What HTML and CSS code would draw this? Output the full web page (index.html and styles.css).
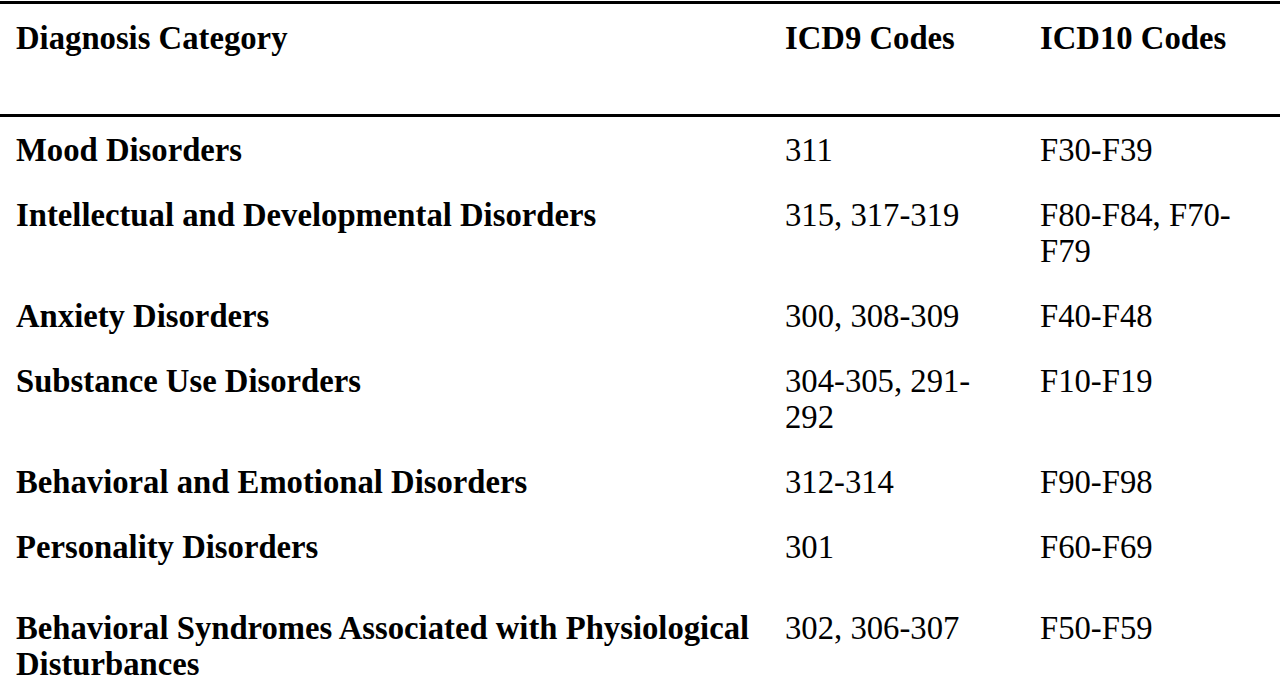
FILE: index.html
```html
<!DOCTYPE html>
<html lang="en">
<head>
<meta charset="utf-8">
<title>Diagnosis Categories</title>
<link rel="stylesheet" href="styles.css">
</head>
<body>
<table class="codes">
  <colgroup>
    <col class="c-cat">
    <col class="c-icd9">
    <col class="c-icd10">
  </colgroup>
  <thead>
    <tr>
      <th class="cat">Diagnosis Category</th>
      <th>ICD9 Codes</th>
      <th>ICD10 Codes</th>
    </tr>
  </thead>
  <tbody>
    <tr>
      <td class="cat">Mood Disorders</td>
      <td>311</td>
      <td>F30-F39</td>
    </tr>
    <tr>
      <td class="cat">Intellectual and Developmental Disorders</td>
      <td>315, 317-319</td>
      <td>F80-F84, F70-<wbr>F79</td>
    </tr>
    <tr>
      <td class="cat">Anxiety Disorders</td>
      <td>300, 308-309</td>
      <td>F40-F48</td>
    </tr>
    <tr>
      <td class="cat">Substance Use Disorders</td>
      <td>304-305, 291-<wbr>292</td>
      <td>F10-F19</td>
    </tr>
    <tr>
      <td class="cat">Behavioral and Emotional Disorders</td>
      <td>312-314</td>
      <td>F90-F98</td>
    </tr>
    <tr class="spaced">
      <td class="cat">Personality Disorders</td>
      <td>301</td>
      <td>F60-F69</td>
    </tr>
    <tr>
      <td class="cat">Behavioral Syndromes Associated with Physiological Disturbances</td>
      <td>302, 306-307</td>
      <td>F50-F59</td>
    </tr>
  </tbody>
</table>
</body>
</html>
```

FILE: styles.css
```css
html, body {
  margin: 0;
  padding: 0;
  background: #ffffff;
}

body {
  padding-top: 1px;
  font-family: "Liberation Serif", "Times New Roman", serif;
  font-size: 32.7px;
  line-height: 36px;
  color: #000000;
}

.codes {
  width: 1280px;
  border-collapse: collapse;
  table-layout: fixed;
  border-top: 3px solid #000;
}

.c-cat { width: 769px; }
.c-icd9 { width: 255px; }
.c-icd10 { width: 256px; }

.codes th,
.codes td {
  text-align: left;
  vertical-align: top;
  padding: 15px 16px 14px 16px;
}

.codes th {
  font-weight: bold;
  padding-top: 16px;
  padding-bottom: 58px;
  border-bottom: 3px solid #000;
}

.codes .cat {
  padding-right: 0;
}

.codes td.cat {
  font-weight: bold;
}

.codes td {
  font-weight: normal;
}

.codes tr.spaced td {
  padding-bottom: 30px;
}
```
